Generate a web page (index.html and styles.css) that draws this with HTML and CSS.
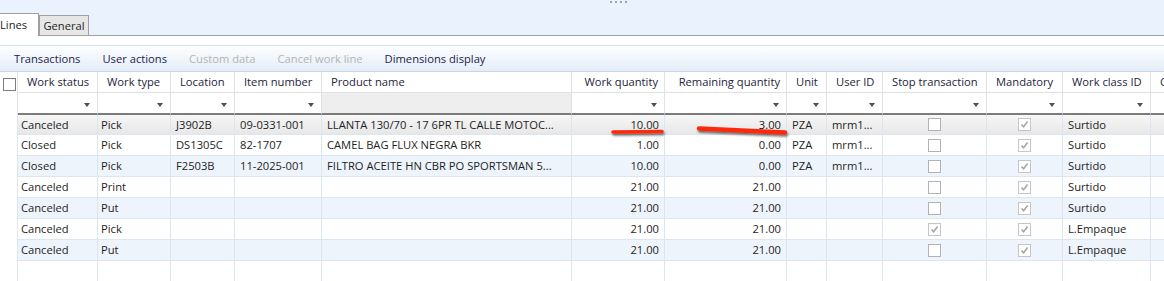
FILE: index.html
```html
<!DOCTYPE html>
<html lang="en">
<head>
  <meta charset="UTF-8" />
  <title>Work lines</title>
  <link rel="stylesheet" href="styles.css">
</head>
<body>
  <div class="page">
    <div class="top">
      <div class="grip"><span></span><span></span><span></span><span></span></div>
      <div class="tabs">
        <div class="tab active">Lines</div>
        <div class="tab">General</div>
        <div class="tab-fill"></div>
      </div>
    </div>
    <div class="gap"></div>

    <div class="toolbar">
      <span>Transactions</span>
      <span>User actions</span>
      <span class="off">Custom data</span>
      <span class="off">Cancel work line</span>
      <span>Dimensions display</span>
    </div>

    <div class="grid">
      <div class="row head">
        <div class="c g"><i class="cb dark"></i></div>
        <div class="c">Work status</div>
        <div class="c">Work type</div>
        <div class="c">Location</div>
        <div class="c">Item number</div>
        <div class="c">Product name</div>
        <div class="c num">Work quantity</div>
        <div class="c num">Remaining quantity</div>
        <div class="c">Unit</div>
        <div class="c">User ID</div>
        <div class="c">Stop transaction</div>
        <div class="c">Mandatory</div>
        <div class="c">Work class ID</div>
        <div class="c">Container ID</div>
      </div>
      <div class="row filter">
        <div class="c g"></div>
        <div class="c"><i class="dd"></i></div>
        <div class="c"><i class="dd"></i></div>
        <div class="c"><i class="dd"></i></div>
        <div class="c"><i class="dd"></i></div>
        <div class="c none"></div>
        <div class="c"><i class="dd"></i></div>
        <div class="c"><i class="dd"></i></div>
        <div class="c"><i class="dd"></i></div>
        <div class="c"><i class="dd"></i></div>
        <div class="c"><i class="dd"></i></div>
        <div class="c"><i class="dd"></i></div>
        <div class="c"><i class="dd"></i></div>
        <div class="c"></div>
      </div>

      <div class="row data sel">
        <div class="c g"></div>
        <div class="c">Canceled</div>
        <div class="c">Pick</div>
        <div class="c">J3902B</div>
        <div class="c">09-0331-001</div>
        <div class="c">LLANTA 130/70 - 17 6PR TL CALLE MOTOC...</div>
        <div class="c num">10.00</div>
        <div class="c num">3.00</div>
        <div class="c">PZA</div>
        <div class="c">mrm1...</div>
        <div class="c box"><i class="cb"></i></div>
        <div class="c box"><i class="cb on"></i></div>
        <div class="c">Surtido</div>
        <div class="c"></div>
      </div>
      <div class="row data">
        <div class="c g"></div>
        <div class="c">Closed</div>
        <div class="c">Pick</div>
        <div class="c">DS1305C</div>
        <div class="c">82-1707</div>
        <div class="c">CAMEL BAG FLUX NEGRA BKR</div>
        <div class="c num">1.00</div>
        <div class="c num">0.00</div>
        <div class="c">PZA</div>
        <div class="c">mrm1...</div>
        <div class="c box"><i class="cb"></i></div>
        <div class="c box"><i class="cb on"></i></div>
        <div class="c">Surtido</div>
        <div class="c"></div>
      </div>
      <div class="row data alt">
        <div class="c g"></div>
        <div class="c">Closed</div>
        <div class="c">Pick</div>
        <div class="c">F2503B</div>
        <div class="c">11-2025-001</div>
        <div class="c">FILTRO ACEITE HN CBR PO SPORTSMAN 5...</div>
        <div class="c num">10.00</div>
        <div class="c num">0.00</div>
        <div class="c">PZA</div>
        <div class="c">mrm1...</div>
        <div class="c box"><i class="cb"></i></div>
        <div class="c box"><i class="cb on"></i></div>
        <div class="c">Surtido</div>
        <div class="c"></div>
      </div>
      <div class="row data">
        <div class="c g"></div>
        <div class="c">Canceled</div>
        <div class="c">Print</div>
        <div class="c"></div>
        <div class="c"></div>
        <div class="c"></div>
        <div class="c num">21.00</div>
        <div class="c num">21.00</div>
        <div class="c"></div>
        <div class="c"></div>
        <div class="c box"><i class="cb"></i></div>
        <div class="c box"><i class="cb on"></i></div>
        <div class="c">Surtido</div>
        <div class="c"></div>
      </div>
      <div class="row data alt">
        <div class="c g"></div>
        <div class="c">Canceled</div>
        <div class="c">Put</div>
        <div class="c"></div>
        <div class="c"></div>
        <div class="c"></div>
        <div class="c num">21.00</div>
        <div class="c num">21.00</div>
        <div class="c"></div>
        <div class="c"></div>
        <div class="c box"><i class="cb"></i></div>
        <div class="c box"><i class="cb on"></i></div>
        <div class="c">Surtido</div>
        <div class="c"></div>
      </div>
      <div class="row data">
        <div class="c g"></div>
        <div class="c">Canceled</div>
        <div class="c">Pick</div>
        <div class="c"></div>
        <div class="c"></div>
        <div class="c"></div>
        <div class="c num">21.00</div>
        <div class="c num">21.00</div>
        <div class="c"></div>
        <div class="c"></div>
        <div class="c box"><i class="cb on"></i></div>
        <div class="c box"><i class="cb on"></i></div>
        <div class="c">L.Empaque</div>
        <div class="c"></div>
      </div>
      <div class="row data alt">
        <div class="c g"></div>
        <div class="c">Canceled</div>
        <div class="c">Put</div>
        <div class="c"></div>
        <div class="c"></div>
        <div class="c"></div>
        <div class="c num">21.00</div>
        <div class="c num">21.00</div>
        <div class="c"></div>
        <div class="c"></div>
        <div class="c box"><i class="cb"></i></div>
        <div class="c box"><i class="cb on"></i></div>
        <div class="c">L.Empaque</div>
        <div class="c"></div>
      </div>
      <div class="row data empty">
        <div class="c g"></div>
        <div class="c"></div>
        <div class="c"></div>
        <div class="c"></div>
        <div class="c"></div>
        <div class="c"></div>
        <div class="c"></div>
        <div class="c"></div>
        <div class="c"></div>
        <div class="c"></div>
        <div class="c"></div>
        <div class="c"></div>
        <div class="c"></div>
        <div class="c"></div>
      </div>
    </div>

    <!-- hand drawn marks over the quantities -->
    <svg class="marks" width="1164" height="281" viewBox="0 0 1164 281">
      <defs>
        <filter id="sh" filterUnits="userSpaceOnUse" x="0" y="0" width="1164" height="281">
          <feDropShadow dx="1" dy="2" stdDeviation="1.3" flood-color="#000" flood-opacity="0.55" />
        </filter>
      </defs>
      <line x1="613" y1="132" x2="662" y2="131.5" stroke="#fb2a0c" stroke-width="3.5" stroke-linecap="round" filter="url(#sh)" />
      <line x1="699" y1="128.5" x2="785" y2="132.5" stroke="#fb2a0c" stroke-width="4.5" stroke-linecap="round" filter="url(#sh)" />
    </svg>
  </div>
</body>
</html>
```

FILE: styles.css
```css
* {
  box-sizing: border-box;
}

body {
  margin: 0;
  font-family: "Open Sans", "Noto Sans", sans-serif;
  font-size: 11.2px;
  color: #1e1e1e;
  background: #fff;
}

.page {
  position: relative;
  width: 1164px;
  height: 281px;
  overflow: hidden;
}

/* tabs */
.top {
  height: 36px;
  background: #eaf3fd;
  display: flex;
  flex-direction: column;
}

.grip {
  height: 13px;
  display: flex;
  gap: 3px;
  padding: 1px 0 0 610px;
}

.grip span {
  width: 2px;
  height: 2px;
  background: #9aa4ae;
}

.tabs {
  height: 23px;
  display: flex;
  align-items: flex-end;
}

.tab {
  width: 50px;
  height: 21px;
  border: 1px solid #a0a0a0;
  background: #e6e6e6;
  text-align: center;
  line-height: 19px;
  color: #1e1e1e;
}

.tab.active {
  width: 46px;
  height: 23px;
  margin-left: -7px;
  border-bottom: none;
  background: #fff;
  text-align: left;
  padding-left: 6px;
  line-height: 22px;
}

.tab-fill {
  flex: 1;
  height: 1px;
  background: #a0a0a0;
}

.gap {
  height: 9px;
}

/* action bar */
.toolbar {
  height: 27px;
  display: flex;
  align-items: center;
  gap: 22px;
  padding-left: 14px;
  border-top: 1px solid #d8e3ee;
  border-bottom: 1px solid #c8d5e2;
  background: linear-gradient(#fdfeff, #e4edf8);
  color: #1c1c4e;
}

.toolbar .off {
  color: #b4b4b4;
}

/* grid */
.row {
  display: grid;
  grid-template-columns: 18px 80px 73px 64px 87px 250px 93px 122px 40px 56px 104px 76px 88px 100px;
}

.c {
  white-space: nowrap;
  overflow: hidden;
}

.head .c {
  height: 21px;
  padding: 0 6px 0 9px;
  line-height: 20px;
  background: #fff;
  border-right: 1px solid #e1e1e1;
  border-bottom: 1px solid #e1e1e1;
  color: #1e1e3a;
}

.head .c.num {
  text-align: right;
}

.head .c.g {
  padding: 5px 0 0 3px;
  border-bottom: none;
}

.filter .c {
  height: 22px;
  display: flex;
  justify-content: flex-end;
  align-items: flex-start;
  padding: 10px 7px 0 0;
  background: #fff;
  border-right: 1px solid #e1e1e1;
  border-bottom: 2px solid #7c7c7c;
}

.filter .c.g {
  border-bottom: none;
}

.filter .c.none {
  background: #eeeeee;
}

.dd {
  width: 0;
  height: 0;
  border-left: 3.5px solid transparent;
  border-right: 3.5px solid transparent;
  border-top: 4px solid #4f4f4f;
}

.data .c {
  height: 21px;
  padding: 0 5px;
  line-height: 20px;
  border-right: 1px solid #dce6f1;
  border-bottom: 1px solid #dce6f1;
}

.data .c:nth-child(2),
.data .c:nth-child(3) {
  padding-left: 3px;
}

.data.sel .c {
  height: 20px;
  line-height: 19px;
  background: linear-gradient(#f7f7f7, #e7e7e7);
}

.data.alt .c {
  background: #eef4fc;
}

.data .c.g {
  background: #fff;
  border-bottom: none;
}

.data .c.num {
  text-align: right;
}

.data .c.box {
  display: flex;
  justify-content: center;
  align-items: center;
}

.data.empty .c {
  height: 20px;
  border-bottom: none;
}

/* checkboxes */
.cb {
  display: inline-block;
  width: 13px;
  height: 13px;
  border: 1px solid #b2b2b2;
  background: #fff;
}

.cb.dark {
  border-color: #7d7d7d;
}

.cb.on {
  border-color: #c6c6c6;
  background: #fff url("data:image/svg+xml,%3Csvg xmlns='http://www.w3.org/2000/svg' width='11' height='11'%3E%3Cpath d='M2.5 5.5 L4.6 7.8 L8.6 2.6' fill='none' stroke='%23a6a6a6' stroke-width='1.6'/%3E%3C/svg%3E") no-repeat center;
}

.marks {
  position: absolute;
  left: 0;
  top: 0;
  pointer-events: none;
}
```
